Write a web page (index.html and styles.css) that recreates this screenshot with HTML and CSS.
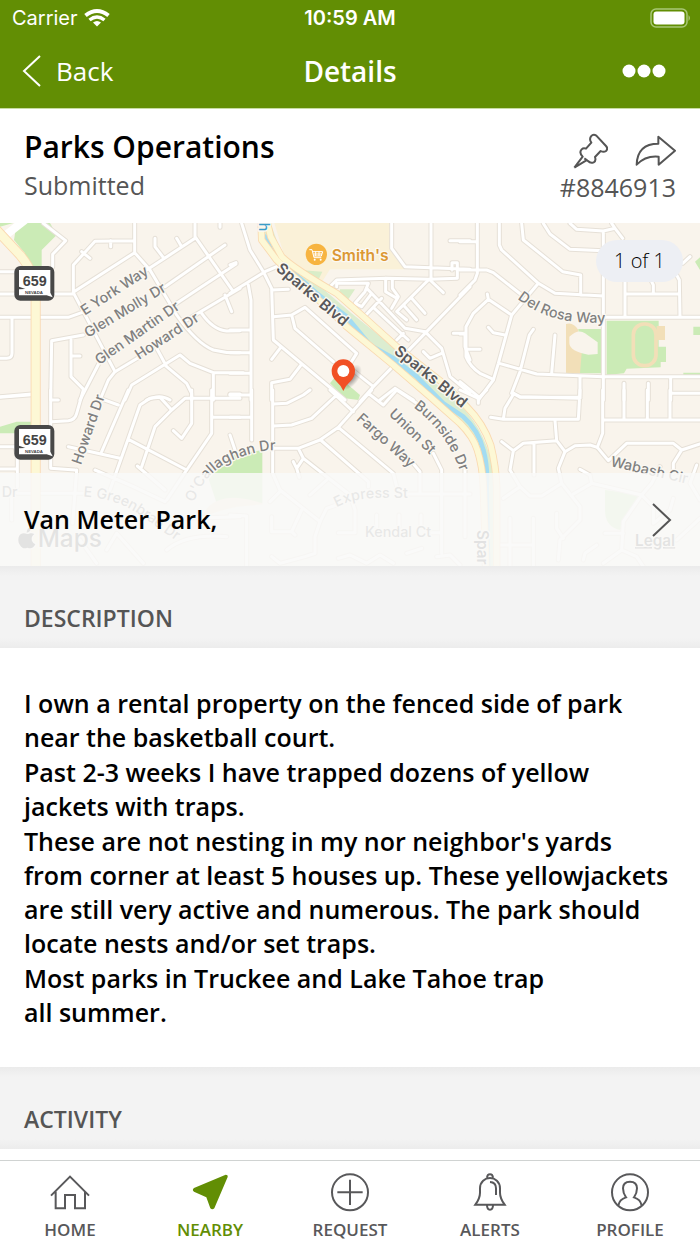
FILE: index.html
```html
<!DOCTYPE html>
<html lang="en">
<head>
  <meta charset="utf-8">
  <meta name="viewport" content="width=device-width">
  <title>Details</title>
  <link rel="stylesheet" href="styles.css">
</head>
<body>
  <header class="topbar">
    <div class="status">
      <span class="carrier">Carrier
        <svg width="26" height="20" viewBox="0 0 26 20" fill="none" stroke="#fff" stroke-width="4">
          <path d="M1.5 7.5Q13-1.5 24.500 7.500"/>
          <path d="M5.500 12Q13 6 20.500 12" stroke-width="3.500"/>
          <path d="M9 14.500Q13 11.500 17 14.500L13 18.500Z" fill="#fff" stroke="none"/>
        </svg>
      </span>
      <span class="time">10:59 AM</span>
      <svg class="battery" width="42" height="20" viewBox="0 0 42 20">
        <rect x="1" y="1" width="36" height="18" rx="5" fill="none" stroke="#a9c777" stroke-width="1.500"/>
        <rect x="3.500" y="3.500" width="31" height="13" rx="3" fill="#fff"/>
        <path d="M38.500 7q3 3 0 6z" fill="#a9c777"/>
      </svg>
    </div>
    <nav class="nav">
      <a class="back" href="#">
        <svg width="20" height="32" viewBox="0 0 20 32" fill="none" stroke="#fff" stroke-width="2"><path d="M18 1L2 16L18 31"/></svg>
        Back
      </a>
      <h1>Details</h1>
      <button class="more" aria-label="More">
        <svg width="44" height="14" viewBox="0 0 44 14" fill="#fff"><circle cx="7" cy="7" r="6.500"/><circle cx="22" cy="7" r="6.500"/><circle cx="37" cy="7" r="6.500"/></svg>
      </button>
    </nav>
  </header>

  <main>
    <section class="summary">
      <div>
        <h2>Parks Operations</h2>
        <p>Submitted</p>
      </div>
      <div class="summary-side">
        <div class="actions">
          <button aria-label="Pin">
            <svg width="38" height="38" viewBox="-6 -3 114 114" fill="none" stroke="#555" stroke-width="6" stroke-linejoin="round">
              <path d="M7 107L32 74Q20 62 29 52Q34 47 42 50L58 32Q51 22 57 13Q64 5 73 11L102 42Q109 50 102 57Q95 62 86 57L69 75Q73 87 65 91Q55 95 48 87Q42 82 37 79M7 107L43 85"/>
            </svg>
          </button>
          <button aria-label="Share">
            <svg width="42" height="34" viewBox="-6 -5 126 102" fill="none" stroke="#555" stroke-width="6" stroke-linejoin="round">
              <path d="M2 90Q4 27 67 27V6L117 48L68 90V66Q29 62 2 90Z"/>
            </svg>
          </button>
        </div>
        <p>#8846913</p>
      </div>
    </section>

    <section class="map">
      <svg class="map-canvas" viewBox="0 9 2100 1029" preserveAspectRatio="xMidYMid slice">
        <defs>
          <g id="roads">
            <path d="M130 10L197 62L158 103V140M404 10V98L450 150L530 285Q590 370 640 390Q680 400 720 398M404 62L285 64L220 135V218L345 455M245 95L270 115M332 62V80M404 98L222 215M0 222H222M0 155H45M0 292H205L262 272M36 292V400Q36 415 20 415H0"/>
            <path d="M585 10V50L700 215M440 150L585 55M495 200L675 75M530 250L708 132M560 300L720 205M465 55V80L492 115M530 55L545 80M675 225L695 275M660 10V22M605 280Q640 330 680 333L720 332"/>
            <path d="M250 345L155 362L152 540M213 360V470L248 505M213 408H240M302 420L240 540M345 455L325 480L300 540M345 455L420 410M375 540L395 495L540 405L570 430L640 458H730M470 385L500 440L560 490L575 520V540M640 458V540M440 540Q480 520 510 540M690 522H720M0 530L95 522"/>
            <g transform="translate(690 0)">
              <path d="M35 10L60 90L100 155L125 205L130 360L345 540M0 220L105 155L140 140M0 135L18 128M125 210L175 208M130 290L185 285L225 262L380 400L355 440M185 285L195 325L310 425M150 385L125 418M55 195L63 240V540M0 330H63M0 398H63M0 460H63M213 435L180 478L125 488V540"/>
              <path d="M355 440L430 500L590 335L720 200M430 500L390 545M495 505L450 540M495 505L550 540M485 10V85L525 140L720 148M603 10V175M660 62H720M300 200L320 180L470 175L600 178L682 175V128H666V150"/>
              <path d="M320 200V190H415L405 215L375 250L395 260L425 220M410 205L525 325L585 335M430 262L535 360M405 288L455 235M467 175V215L500 235M487 178V205L505 230L485 265M595 180L500 275L530 300M600 180L640 218M545 235L585 280M520 255L560 300M520 340L500 360M585 335L635 385L660 470L720 520M635 400L600 415L580 395M670 340H705V380L720 420"/>
            </g>
            <g transform="translate(1380 0)">
              <path d="M52 10V160L45 180L0 225M0 65H50M0 150H80L100 158L185 225M118 10V75L125 90L235 190L285 220L430 228M235 190L155 285L115 430L100 480L55 540M185 10L190 60L308 155L362 165V225M250 10L270 42L330 88L430 92M330 10L350 28L430 33L465 25L455 10M465 25L488 55M430 33V540M430 292H720M495 180V290M495 222H655M575 185L580 195V220M650 165L658 180L660 290M690 110L668 130"/>
              <path d="M155 285L85 238L40 280L18 320V410Q30 440 60 460L100 478M85 238L82 222M18 388H60M0 342H18M85 322L100 338L135 345M220 328L208 345L180 455L155 520M285 345L275 460M118 430L230 462L430 470H720M0 485L55 530M160 520L180 532H360V470M492 490V540M565 490V540M632 475V540M632 520H720"/>
            </g>
            <g transform="translate(0 510)">
              <path d="M0 22L95 14M152 0V235L225 240M152 30H175M155 95L205 92Q225 90 230 70L250 0M385 0L305 185M300 25L355 45M450 25L420 45L385 145L330 300M450 25L480 22L515 60L555 25H720M515 60L465 110L425 230M575 0V100L545 145L520 122M635 0V130L560 240L500 330M640 82H720M385 148L560 240M205 170L360 205M412 228L495 300M0 170H45L52 200V290M0 237H52M230 240L218 400M285 240L400 290L495 335M690 15H720M690 135L705 180"/>
              <path d="M52 310H250M35 310V390M560 385L720 380M500 480Q560 430 680 440M240 450L290 520M320 480L350 430L430 520"/>
            </g>
            <g transform="translate(690 510)">
              <path d="M0 15H63M0 82H63M65 0V150M128 0V250L150 300L270 395L255 440V490L225 500L150 520L125 500M130 42L170 40L220 15L240 0M130 108L185 105L245 85L320 15M300 0L370 65M425 0L325 112L270 150L205 175H130M415 10L460 45L500 0M500 0L560 40M325 112L490 250L500 290M272 150L415 275V290M205 175L220 205L360 315L375 360V425M220 205L200 235L208 262M190 215L200 235M240 315L290 270"/>
              <path d="M545 215L570 245V310M610 190L635 240V490M705 235V440M530 312H720M325 428H375M605 428H635M440 375V410M507 375V410M573 375V410M120 335L150 305M125 380V425H185L215 360M185 425L195 435M270 395L290 355L320 345M0 375L50 378V530M325 505L360 495L410 520L450 495L490 520M530 490L575 475M620 500L660 495L690 525"/>
            </g>
            <g transform="translate(1380 510)">
              <path d="M0 0L55 25L80 0M55 25V40M160 10L180 20L360 25M360 0L355 88H130L92 82M162 10L135 55L130 88M428 0V130L412 172M428 90H720M492 0V90M562 0V90M630 0V90M285 92L290 152L315 185L295 235L305 280L360 350V390L300 450L295 510M125 155L160 182L190 160L290 152M160 182L150 240L180 290L130 325M180 290L210 318H245L305 280M222 160V255"/>
              <path d="M315 185L345 167L390 165L412 172L445 212L500 160H640L665 180L720 162M665 180L640 220V250M710 225L690 280L720 330M360 238L390 255L395 280L340 312M395 280L545 315L575 280L600 230M545 315L490 395L485 480L430 520M545 315L580 350V400L630 360L640 325M290 370V415L310 445M150 385V530M220 385V530M115 465H220M435 430H490M720 385L650 450M370 510L375 490L410 465M485 480L530 500L550 530"/>
            </g>
          </g>
          <g id="boulevard">
            <path d="M783 0L785 60L830 120L930 215L1040 320L1180 435L1290 530L1380 610Q1420 650 1432 690Q1448 740 1450 800L1458 1040"/>
            <path d="M800 0L812 50L845 110Q880 145 1010 220L1090 290L1190 380L1330 490L1400 560Q1450 610 1472 675Q1488 740 1490 800V1040"/>
          </g>
          <g id="shield">
            <rect x="43" y="138" width="120" height="104" rx="18" fill="#484848"/>
            <path d="M57 150H151V218L158 232L140 226H57V208L76 207L57 200Z" fill="#fff"/>
            <text class="route" x="104" y="198">659</text>
            <text class="state" x="102" y="222">NEVADA</text>
          </g>
          <path id="del-rosa" d="M1552 236Q1620 290 1700 302T1850 305"/>
          <path id="callaghan" d="M582 848Q615 755 700 720T840 692"/>
          <path id="greenbrae" d="M250 830Q350 835 420 885T570 992"/>
          <path id="burnside" d="M1240 562Q1345 640 1384 765"/>
          <path id="express" d="M1010 862Q1060 835 1120 835H1260"/>
          <radialGradient id="pin-shadow"><stop offset="0" stop-color="#000" stop-opacity=".5"/><stop offset="1" stop-color="#000" stop-opacity="0"/></radialGradient>
        </defs>

        <!-- parks, school grounds and shops -->
        <g fill="#cbebb6">
          <path d="M50 9H150L170 45L125 90V150H80L75 100L42 60Z"/>
          <path d="M0 9H40L0 20ZM0 620L50 605H95V640H0Z"/>
          <path d="M990 490L1010 465L1080 525L1075 540L1035 535Z"/>
          <path d="M620 760L700 705L787 690V850H650Z"/>
          <path d="M1820 302H1976V380H1998V426H1982V442L1880 446L1872 460L1820 465Z"/>
          <path d="M1735 327H1810V460H1740Z"/>
          <path d="M2085 125L2100 112V150ZM2080 320H2100V345H2080ZM2050 458H2100V466H2050Z"/>
          <path d="M1815 810L1925 825L1860 930Q1815 920 1815 870Z"/>
        </g>
        <path d="M1698 312Q1720 305 1735 330L1730 350L1745 400L1740 460H1698ZM1970 318H1995V360H1970Z" fill="#f2dfb8"/>
        <path d="M1708 350Q1735 325 1755 340L1793 367V402L1765 404Q1710 395 1708 370Z" fill="#f9f4ec"/>
        <rect x="1900" y="312" width="68" height="125" rx="32" fill="none" stroke="#f2dfb8" stroke-width="11"/>
        <path d="M820 0H1178V85L1215 148H990L960 195L860 130Z" fill="#faf1d8"/>
        <path d="M900 150L967 155L950 190ZM1020 208H1065L1040 245L1015 235Z" fill="#d9edc8"/>
        <path d="M600 900Q640 800 787 850V853L710 860Q620 880 600 900Z" fill="#f4ead2"/>

        <use href="#roads" class="road-edge"/>
        <use href="#roads" class="road"/>
        <path d="M790 0L830 110L1040 290L1190 410L1360 560Q1430 620 1462 740V1040" class="median"/>
        <path d="M795 50L820 105L950 220L1040 290L1110 375L1180 415L1250 470L1330 550L1390 590Q1435 630 1450 690Q1464 740 1460 800L1464 1040" class="creek"/>
        <path d="M5 55L75 0" fill="none" stroke="#fff" stroke-width="24"/>
        <path class="highway-edge" d="M-10 30L60 105Q107 160 107 230V1040"/>
        <path class="highway" d="M-10 30L60 105Q107 160 107 230V1040"/>
        <use href="#boulevard" class="avenue-edge"/>
        <use href="#boulevard" class="avenue"/>

        <use href="#shield"/>
        <use href="#shield" y="477"/>

        <g class="street">
          <text transform="translate(254 287) rotate(-33)">E York Way</text>
          <text transform="translate(264 354) rotate(-31)">Glen Molly Dr</text>
          <text transform="translate(298 436) rotate(-35)">Glen Martin Dr</text>
          <text transform="translate(417 420) rotate(-33)">Howard Dr</text>
          <text transform="translate(243 736) rotate(-71)">Howard Dr</text>
          <text x="5" y="830">Dr</text>
          <text><textPath href="#del-rosa">Del Rosa Way</textPath></text>
          <text><textPath href="#callaghan">O'Callaghan Dr</textPath></text>
          <text><textPath href="#greenbrae">E Greenbrae Dr</textPath></text>
          <text transform="translate(1067 599) rotate(42)">Fargo Way</text>
          <text transform="translate(1165 584) rotate(44)">Union St</text>
          <text><textPath href="#burnside">Burnside Dr</textPath></text>
          <text><textPath href="#express">Express St</textPath></text>
          <text x="1095" y="950">Kendal Ct</text>
          <text transform="translate(1830 738) rotate(13)">Wabash Cir</text>
          <text class="main-street" transform="translate(1430 930) rotate(90)">Spar</text>
        </g>
        <g class="street main-street">
          <text transform="translate(826 150) rotate(40)">Sparks Blvd</text>
          <text transform="translate(1180 398) rotate(39)">Sparks Blvd</text>
        </g>
        <text class="water" transform="translate(776 8) rotate(90)">h</text>
        <text class="shop" x="995" y="123">Smith's</text>
        <circle cx="949" cy="103" r="32" fill="#f7b440"/>
        <path d="M928 89H936L942 113H964M938 95H968L964 108H941M947 94V108M957 94V108M940 102H966" fill="none" stroke="#fff" stroke-width="3"/>
        <circle cx="944" cy="119" r="3" fill="#fff"/><circle cx="962" cy="119" r="3" fill="#fff"/>

        <ellipse cx="1052" cy="472" rx="45" ry="24" transform="rotate(-52 1052 472)" fill="url(#pin-shadow)"/>
        <path d="M1030 513Q1022 495 1008 483Q995 470 995 453A35 35 0 0 1 1065 453Q1065 470 1052 483Q1038 495 1030 513Z" fill="#f15025"/>
        <circle cx="1030" cy="453" r="18" fill="#fff"/>

        <g class="attribution">
          <path d="M82 942C89 942 93 937 103 942Q92 950 96 963Q99 970 106 973C100 985 93 987 82 983C69 989 61 979 56 968C52 947 62 934 82 942ZM80 938Q80 924 93 920Q94 935 80 938Z"/>
          <text x="113" y="982">Maps</text>
          <a href="#"><text class="legal" x="1905" y="978">Legal</text></a>
        </g>
      </svg>
      <span class="count">1 of 1</span>
      <a class="place" href="#">
        Van Meter Park,
        <svg width="21" height="36" viewBox="0 0 21 36" fill="none" stroke="#555" stroke-width="2"><path d="M2 3L19 19L2 35"/></svg>
      </a>
    </section>

    <h3 class="section-title">DESCRIPTION</h3>
    <section class="description">
      <p>I own a rental property on the fenced side of park near the basketball court.</p>
      <p>Past 2-3 weeks I have trapped dozens of yellow jackets with traps.</p>
      <p>These are not nesting in my nor neighbor's yards from corner at least 5 houses up. These yellowjackets are still very active and numerous. The park should locate nests and/or set traps.</p>
      <p>Most parks in Truckee and Lake Tahoe trap all&nbsp;summer.</p>
    </section>
    <h3 class="section-title">ACTIVITY</h3>
  </main>

  <nav class="tabs">
    <a href="#">
      <svg width="40" height="40" viewBox="0 0 120 120" fill="none" stroke="#58585a" stroke-width="6"><path d="M3 68L60 11L117 68M17 56V106H45V66H75V106H105V56"/></svg>
      HOME
    </a>
    <a href="#" class="active">
      <svg width="40" height="40" viewBox="0 0 120 120" fill="#628e04"><path d="M107 5Q114 5 113 12L73 106Q67 112 61 106L49 73L12 56Q5 51 12 45Z"/></svg>
      NEARBY
    </a>
    <a href="#">
      <svg width="40" height="40" viewBox="0 0 120 120" fill="none" stroke="#58585a" stroke-width="6"><circle cx="60" cy="58" r="54"/><path d="M60 20V96M22 58H98"/></svg>
      REQUEST
    </a>
    <a href="#">
      <svg width="40" height="40" viewBox="0 0 120 120" fill="none" stroke="#58585a" stroke-width="6">
        <path d="M16 95Q30 76 30 59V46C30 5 90 5 90 46V59Q90 76 104 95ZM60 27Q78 28 78 46V66M51 14Q52 4 60 4T69 14M51 96Q51 110 60 110T69 96"/>
      </svg>
      ALERTS
    </a>
    <a href="#">
      <svg width="40" height="40" viewBox="0 0 120 120" fill="none" stroke="#58585a" stroke-width="6">
        <circle cx="60" cy="58" r="54"/>
        <path d="M25 98Q28 79 48 73Q39 61 39 46Q39 26 60 26T81 46Q81 61 72 73Q92 79 95 98"/>
      </svg>
      PROFILE
    </a>
  </nav>
</body>
</html>
```
FILE: styles.css
```css
html, body {
  margin: 0;
}
body {
  display: flex;
  flex-direction: column;
  min-height: 100vh;
  font-family: "Open Sans", sans-serif;
  font-size: 25px;
  line-height: 34px;
  color: #000;
  background: #fff;
}
h1, h2, h3, p {
  margin: 0;
}
a {
  color: inherit;
  text-decoration: none;
}
button {
  display: block;
  padding: 0;
  border: 0;
  background: none;
}
svg {
  display: block;
}

.topbar {
  color: #fff;
  background: #628e04;
  border-bottom: 1px solid #c8dba2;
}
.status, .nav {
  display: grid;
  grid-template-columns: 1fr auto 1fr;
  align-items: center;
}
.status {
  height: 36px;
  padding: 0 8px;
  font-family: Inter, sans-serif;
  font-size: 20px;
}
.carrier {
  display: flex;
  align-items: center;
  gap: 6px;
  padding-left: 4px;
}
.time {
  font-weight: 600;
}
.battery, .more {
  justify-self: end;
}
.nav {
  height: 70px;
  padding: 0 22px 2px;
}
.back {
  display: flex;
  align-items: center;
  gap: 14px;
  font-size: 26px;
}
.more {
  margin-right: 12px;
}
.nav h1 {
  font-size: 28px;
  font-weight: 600;
}

.summary {
  display: flex;
  justify-content: space-between;
  height: 94px;
  padding: 20px 24px 0;
  color: #555;
}
.summary h2 {
  font-size: 30px;
  font-weight: 600;
  line-height: 36px;
  color: #000;
  margin-bottom: 3px;
}
.summary-side {
  text-align: right;
}
.actions {
  display: flex;
  justify-content: flex-end;
  align-items: center;
  gap: 26px;
  height: 41px;
}

.map {
  position: relative;
  background: #f9f4ec;
}
.map-canvas {
  width: 100%;
  height: 343px;
}
.road-edge, .road, .highway-edge, .highway, .avenue-edge, .avenue, .median, .creek {
  fill: none;
  stroke-linecap: round;
  stroke-linejoin: round;
}
.road-edge { stroke: #e6e0d7; stroke-width: 15px; }
.road { stroke: #fff; stroke-width: 9px; }
.highway-edge { stroke: #fad9b0; stroke-width: 30px; }
.highway { stroke: #fdf8d5; stroke-width: 25px; }
.avenue-edge { stroke: #fad9b0; stroke-width: 22px; }
.avenue { stroke: #fdf8d5; stroke-width: 17px; }
.median { stroke: #dcedd0; stroke-width: 34px; }
.creek { stroke: #a3dcf2; stroke-width: 14px; }
.street, .shop, .water, .attribution {
  font-family: Inter, sans-serif;
  font-size: 43px;
  font-weight: 500;
  fill: #808080;
  stroke: #fbf8f2;
  stroke-width: 8px;
  stroke-linejoin: round;
  paint-order: stroke;
}
.main-street {
  font-size: 46px;
  font-weight: 600;
  fill: #58585a;
}
.shop {
  font-size: 47px;
  font-weight: 600;
  fill: #dc9834;
}
.water {
  fill: #3a9cc7;
}
.route {
  font: bold 43px "Liberation Sans Narrow", "Liberation Sans", sans-serif;
  text-anchor: middle;
  fill: #444;
}
.state {
  font: bold 13px "Liberation Sans", sans-serif;
  text-anchor: middle;
  fill: #444;
}
.attribution {
  font-size: 73px;
  fill: #606060;
}
.legal {
  font-size: 46px;
  font-weight: 600;
  text-decoration: underline;
}
.count {
  position: absolute;
  top: 17px;
  right: 17px;
  padding: 4px 18px;
  border-radius: 22px;
  font-size: 20px;
  font-weight: 300;
  background: #edeff4;
}
.place {
  position: absolute;
  left: 0;
  right: 0;
  bottom: 0;
  display: flex;
  justify-content: space-between;
  align-items: center;
  height: 91px;
  padding: 0 28px 2px 24px;
  font-weight: 600;
  background: rgba(249, 249, 248, .86);
}

.section-title {
  padding: 35px 24px 13px;
  font-size: 23px;
  font-weight: 600;
  color: #555;
  background: linear-gradient(#ebebeb, #f3f3f3 10px, #f3f3f3 72px, #ececec);
}
.description {
  display: grid;
  gap: 1px;
  padding: 38px 24px;
  font-weight: 600;
}

.tabs {
  position: sticky;
  bottom: 0;
  display: grid;
  grid-template-columns: repeat(5, 1fr);
  margin-top: auto;
  padding: 12px 0 0;
  border-top: 1px solid #d0d3d2;
  font-size: 17px;
  font-weight: 600;
  color: #58585a;
  background: #fff;
}
.tabs a {
  display: flex;
  flex-direction: column;
  align-items: center;
  gap: 3px;
  line-height: 28px;
}
.active {
  color: #628e04;
}
```
